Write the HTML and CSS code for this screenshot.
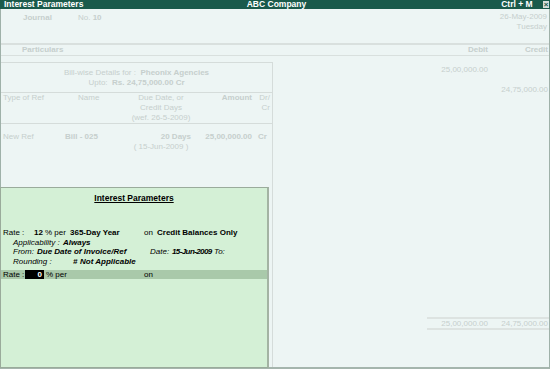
FILE: index.html
```html
<!DOCTYPE html>
<html lang="en">
<head>
  <meta charset="UTF-8">
  <title>Interest Parameters</title>
  <link rel="stylesheet" href="styles.css">
</head>
<body>
  <div class="titlebar">
    <span class="tb-left">Interest Parameters</span>
    <span class="tb-center">ABC Company</span>
    <span class="tb-right">Ctrl + M <span class="close-box">&#215;</span></span>
  </div>

  <div class="screen">
    <div class="vhead">
      <div class="vtype">
        <span class="b journal">Journal</span>
        <span>No. <b>10</b></span>
      </div>
      <div class="vdate">
        <div>26-May-2009</div>
        <div>Tuesday</div>
      </div>
    </div>

    <div class="colhead">
      <span class="b particulars">Particulars</span>
      <span class="b amt-col">Debit</span>
      <span class="b amt-col">Credit</span>
    </div>

    <div class="body">
      <div class="billwise">
        <div class="bw-title">
          <div>Bill-wise Details for : &nbsp;<b>Pheonix Agencies</b></div>
          <div>Upto: &nbsp;<b>Rs. 24,75,000.00 Cr</b></div>
        </div>
        <div class="bw-grid bw-head">
          <div>Type of Ref</div>
          <div class="c-name">Name</div>
          <div class="c-due">Due Date, or<br>Credit Days<br>(wef. 26-5-2009)</div>
          <div class="c-amt b">Amount</div>
          <div class="c-drcr">Dr/<br>Cr</div>
        </div>
        <div class="bw-grid bw-row">
          <div>New Ref</div>
          <div class="b c-name-val">Bill - 025</div>
          <div class="c-due-val"><div class="b days">20 Days</div><div>( 15-Jun-2009 )</div></div>
          <div class="c-amt b">25,00,000.00</div>
          <div class="b c-drcr-val">Cr</div>
        </div>
      </div>

      <div class="ledger">
        <div class="lrow"><span class="amt-col">25,00,000.00</span><span class="amt-col"></span></div>
        <div class="lrow gap"><span class="amt-col"></span><span class="amt-col">24,75,000.00</span></div>
        <div class="totals">
          <span class="amt-col">25,00,000.00</span>
          <span class="amt-col">24,75,000.00</span>
        </div>
      </div>
    </div>
  </div>

  <!-- Interest Parameters popup -->
  <div class="popup">
    <div class="pop-title">Interest Parameters</div>
    <div class="prow">
      <span class="w31">Rate :</span>
      <span class="w11 b">12</span>
      <span class="w25">% per</span>
      <span class="w74 b">365-Day Year</span>
      <span class="w13">on</span>
      <span class="b">Credit Balances Only</span>
    </div>
    <div class="prow ind">
      <span class="w50 i">Applicability :</span>
      <span class="b i">Always</span>
    </div>
    <div class="prow ind">
      <span class="w24 i">From:</span>
      <span class="w113 b i">Due Date of Invoice/Ref</span>
      <span class="w22 i">Date:</span>
      <span class="w42 b i narrow">15-Jun-2009</span>
      <span class="i">To:</span>
    </div>
    <div class="prow ind">
      <span class="w60 i">Rounding :</span>
      <span class="w7 b i">#</span>
      <span class="b i">Not Applicable</span>
    </div>
    <div class="prow bar">
      <span class="w22">Rate :</span>
      <span class="entry">0</span>
      <span class="w98">% per</span>
      <span>on</span>
    </div>
  </div>
</body>
</html>
```

FILE: styles.css
```css
body {
  margin: 0;
  width: 550px;
  height: 369px;
  overflow: hidden;
  position: relative;
  background: #edf5f4;
  font-family: "Liberation Sans", Arial, sans-serif;
  font-size: 8px;
  line-height: 10px;
  color: #c6cfcd;
}

b, .b {
  font-weight: bold;
}

.i {
  font-style: italic;
}

/* title bar */
.titlebar {
  height: 9px;
  line-height: 9px;
  background: #1a5a4b;
  color: #fff;
  font-weight: bold;
  font-size: 8.5px;
  display: grid;
  grid-template-columns: 1fr auto 1fr;
  padding: 0 1px 0 4px;
}

.tb-center {
  text-align: center;
}

.tb-right {
  text-align: right;
}

.close-box {
  display: inline-block;
  width: 6px;
  height: 7px;
  line-height: 7px;
  margin-left: 8px;
  background: #d6dfdb;
  color: #1a5a4b;
  text-align: center;
  font-size: 8px;
  vertical-align: top;
  margin-top: 1px;
}

/* main screen */
.screen {
  height: 358px;
  border-left: 1px solid #9fb1a9;
  border-right: 1px solid #9fb1a9;
  border-bottom: 2px solid #a5b5ad;
  display: flex;
  flex-direction: column;
}

.vhead {
  height: 34px;
  display: flex;
  justify-content: space-between;
  padding-right: 2px;
}

.vtype {
  display: flex;
  padding: 4px 0 0 22px;
}

.journal {
  width: 55px;
}

.vdate {
  text-align: right;
  padding-top: 3px;
}

.colhead {
  display: flex;
  border-top: 2px solid #d9e0de;
  border-bottom: 1px solid #d9e0de;
  padding-right: 1px;
}

.particulars {
  flex: 1;
  padding-left: 21px;
}

.amt-col {
  width: 60px;
  text-align: right;
}

.body {
  flex: 1;
  display: flex;
}

/* bill-wise box */
.billwise {
  width: 271px;
  margin-top: 6px;
  border-top: 1px solid #d5dcda;
  border-right: 1px solid #d5dcda;
}

.bw-title {
  text-align: center;
  padding: 5px 0 4px;
  border-bottom: 1px solid #d5dcda;
}

.bw-grid {
  display: grid;
  grid-template-columns: 60px 66px 64px 60px 18px;
  padding-left: 2px;
}

.bw-head {
  border-bottom: 1px solid #d5dcda;
}

.c-name {
  padding-left: 15px;
}

.c-name-val {
  padding-left: 2px;
}

.c-due {
  text-align: center;
}

.c-amt {
  text-align: right;
  padding-right: 1px;
}

.c-drcr {
  text-align: right;
  padding-right: 1px;
}

.c-drcr-val {
  padding-left: 5px;
}

.bw-row {
  padding-top: 8px;
}

.c-due-val {
  text-align: center;
}

.days {
  text-align: right;
  padding-right: 2px;
}

/* ledger amounts */
.ledger {
  flex: 1;
  display: flex;
  flex-direction: column;
  padding-top: 9px;
}

.lrow {
  display: flex;
  justify-content: flex-end;
  padding-right: 1px;
}

.lrow.gap {
  margin-top: 10px;
}

.totals {
  margin-top: auto;
  margin-bottom: 37px;
  align-self: flex-end;
  width: 121px;
  display: flex;
  justify-content: flex-end;
  padding-right: 1px;
  border-top: 2px solid #dde3e1;
  border-bottom: 2px solid #dde3e1;
  line-height: 9px;
}

/* popup */
.popup {
  position: absolute;
  left: 0;
  top: 187px;
  width: 266px;
  height: 179px;
  background: #d4f0d6;
  border: 1px solid #9aab9b;
  border-right: 2px solid #a3b3a3;
  color: #000;
  line-height: 9.5px;
}

.pop-title {
  text-align: center;
  font-weight: bold;
  text-decoration: underline;
  font-size: 8.5px;
  line-height: 10px;
  padding: 5px 0 0;
  margin-bottom: 25px;
}

.prow {
  display: flex;
  white-space: nowrap;
  padding-left: 2px;
}

.prow.ind {
  padding-left: 12px;
}

.prow.bar {
  margin-top: 4px;
  background: #a9c9aa;
  height: 9px;
  line-height: 9px;
}

.entry {
  width: 17px;
  margin-right: 2px;
  padding-right: 2px;
  background: #000;
  color: #fff;
  font-weight: bold;
  text-align: right;
}

.narrow {
  letter-spacing: -0.6px;
}

.w7 { width: 7px; }
.w11 { width: 11px; }
.w13 { width: 13px; }
.w22 { width: 22px; }
.w24 { width: 24px; }
.w25 { width: 25px; }
.w31 { width: 31px; }
.w42 { width: 42px; }
.w50 { width: 50px; }
.w60 { width: 60px; }
.w74 { width: 74px; }
.w98 { width: 98px; }
.w113 { width: 113px; }
```
